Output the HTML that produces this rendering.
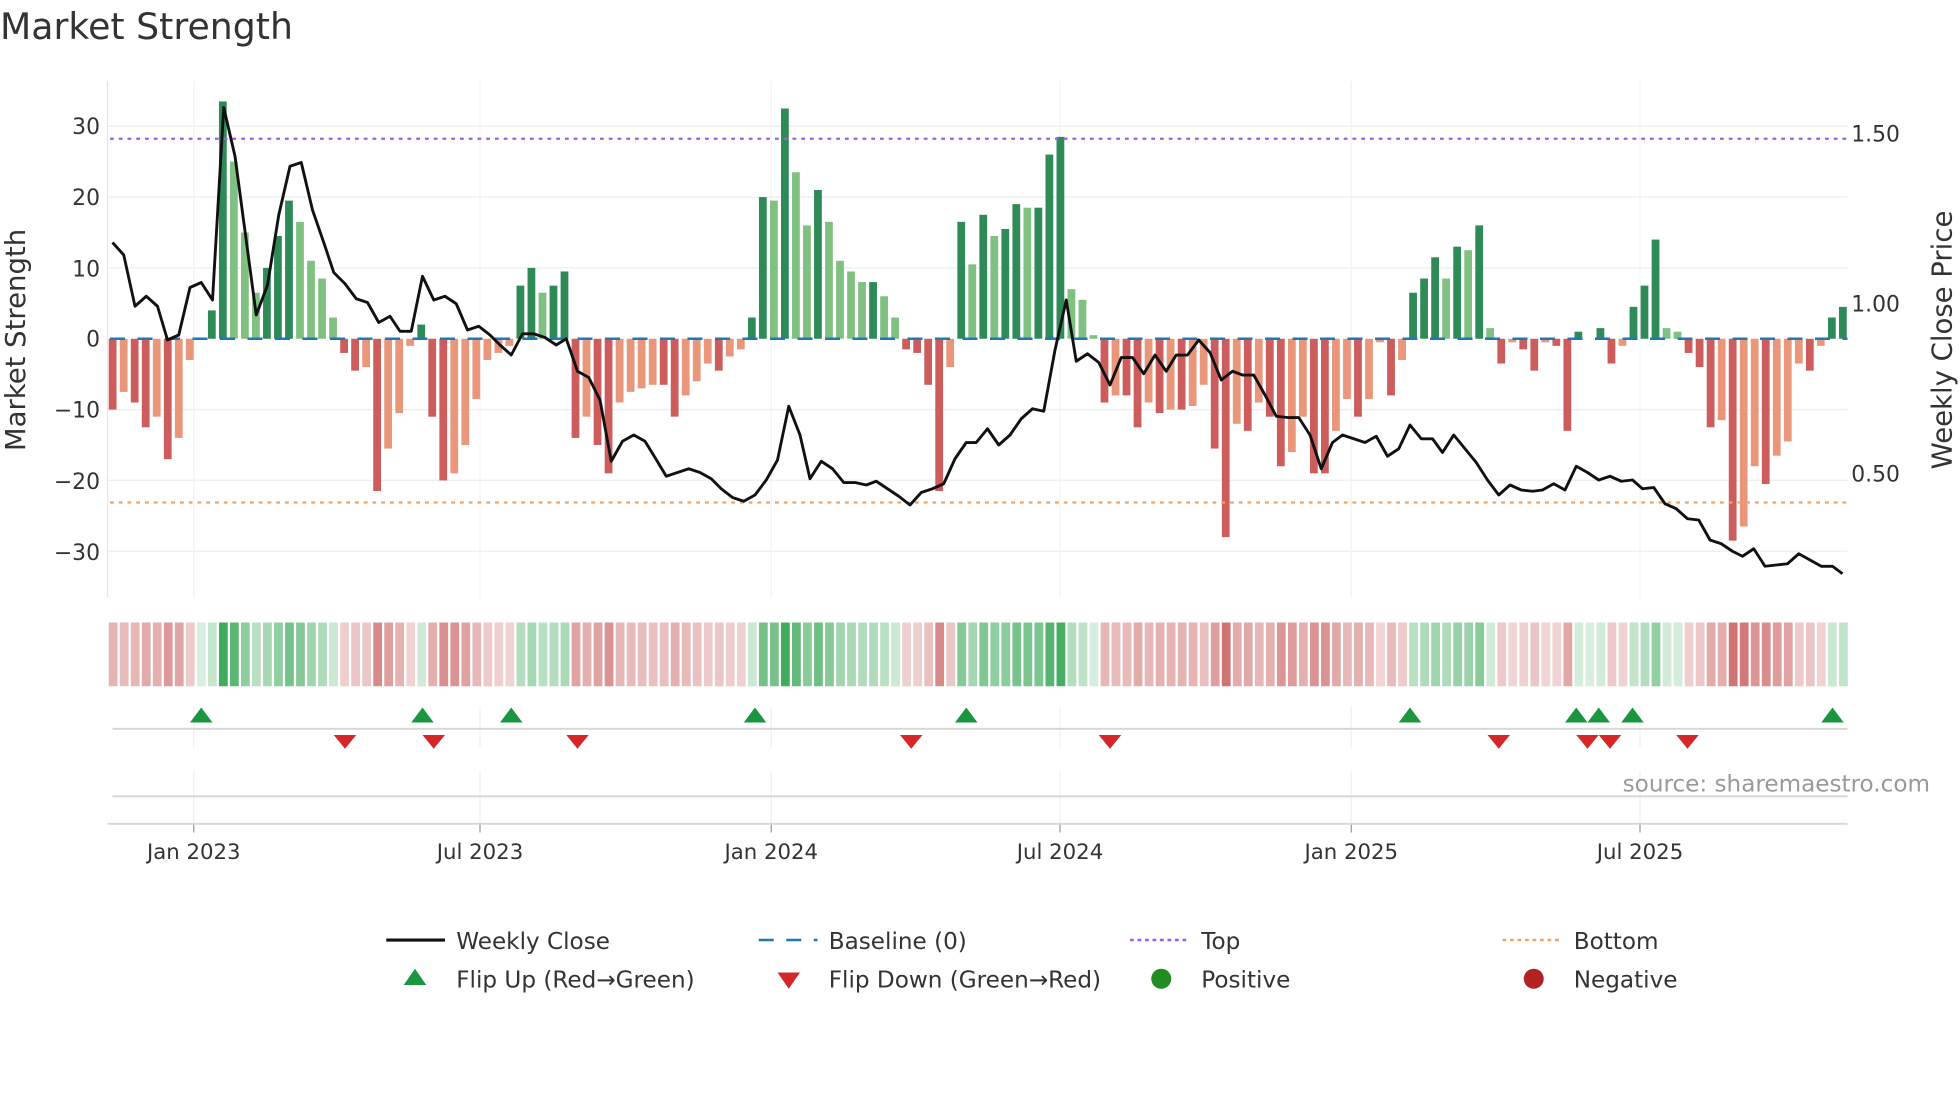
<!DOCTYPE html>
<html><head><meta charset="utf-8"><style>
html,body{margin:0;padding:0;background:#fff;width:1960px;height:1102px;overflow:hidden}
svg{display:block;font-family:"DejaVu Sans","Liberation Sans",sans-serif}
</style></head><body>
<svg id="s" width="1960" height="1102" viewBox="0 0 1568 881.6" xmlns="http://www.w3.org/2000/svg">
<rect width="1568" height="882" fill="#fff"/>
<text x="0" y="31" font-size="29" fill="#333">Market Strength</text>
<g id="grid"></g>
<g id="bars"></g>
<g id="heat"></g>
<g id="lines"></g>
<g font-size="17.5" fill="#333" text-anchor="end">
<text x="80" y="107">30</text><text x="80" y="164">20</text><text x="80" y="221">10</text><text x="80" y="277">0</text>
<text x="80" y="334">−10</text><text x="80" y="391">−20</text><text x="80" y="448">−30</text>
</g>
<g font-size="17.5" fill="#333">
<text x="1481" y="113">1.50</text><text x="1481" y="249">1.00</text><text x="1481" y="385">0.50</text>
</g>
<text transform="translate(20,272) rotate(-90)" font-size="22" fill="#333" text-anchor="middle">Market Strength</text>
<text transform="translate(1561,272) rotate(-90)" font-size="22" fill="#333" text-anchor="middle">Weekly Close Price</text>
<text x="1544" y="633" font-size="18.5" fill="#999" text-anchor="end">source: sharemaestro.com</text>
<g font-size="17" fill="#333" text-anchor="middle">
<text x="155" y="687">Jan 2023</text><text x="384" y="687">Jul 2023</text><text x="617" y="687">Jan 2024</text>
<text x="848" y="687">Jul 2024</text><text x="1081" y="687">Jan 2025</text><text x="1312" y="687">Jul 2025</text>
</g>
<g font-size="18.5" fill="#333">
<line x1="309" y1="752" x2="356" y2="752" stroke="#111" stroke-width="2.5"/><text x="365" y="759">Weekly Close</text>
<line x1="607" y1="752" x2="654" y2="752" stroke="#1f77b4" stroke-width="2" stroke-dasharray="12,10"/><text x="663" y="759">Baseline (0)</text>
<line x1="904" y1="752" x2="951" y2="752" stroke="#9b5de5" stroke-width="2" stroke-dasharray="3,3"/><text x="961" y="759">Top</text>
<line x1="1202" y1="752" x2="1249" y2="752" stroke="#f4a261" stroke-width="2" stroke-dasharray="3,3"/><text x="1259" y="759">Bottom</text>
<polygon points="332,775 341,788 323,788" fill="#1a9641"/><text x="365" y="790">Flip Up (Red→Green)</text>
<polygon points="622,778 640,778 631,791" fill="#d62728"/><text x="663" y="790">Flip Down (Green→Red)</text>
<circle cx="929" cy="783" r="8" fill="#228b22"/><text x="961" y="790">Positive</text>
<circle cx="1227" cy="783" r="8" fill="#b22222"/><text x="1259" y="790">Negative</text>
</g>
</svg>
<script>
var NS="http://www.w3.org/2000/svg";
function el(p,t,a){var e=document.createElementNS(NS,t);for(var k in a)e.setAttribute(k,a[k]);p.appendChild(e);return e;}
var v=[-10,-7.5,-9,-12.5,-11,-17,-14,-3,0,4,33.5,25,15,6.5,10,14.5,19.5,16.5,11,8.5,3,-2,-4.5,-4,-21.5,-15.5,-10.5,-1,2,-11,-20,-19,-15,-8.5,-3,-2,-1,7.5,10,6.5,7.5,9.5,-14,-11,-15,-19,-9,-7.5,-7,-6.5,-6.5,-11,-8,-6,-3.5,-4.5,-2.5,-1.5,3,20,19.5,32.5,23.5,16,21,16.5,11,9.5,8,8,6,3,-1.5,-2,-6.5,-21.5,-4,16.5,10.5,17.5,14.5,15.5,19,18.5,18.5,26,28.5,7,5.5,0.5,-9,-8,-8,-12.5,-9,-10.5,-10,-10,-9.5,-6.5,-15.5,-28,-12,-13,-9,-11,-18,-16,-11,-19,-19,-13,-8.5,-11,-8.5,-0.5,-8,-3,6.5,8.5,11.5,8.5,13,12.5,16,1.5,-3.5,-0.5,-1.5,-4.5,-0.5,-1,-13,1,0,1.5,-3.5,-1,4.5,7.5,14,1.5,1,-2,-4,-12.5,-11.5,-28.5,-26.5,-18,-20.5,-16.5,-14.5,-3.5,-4.5,-1,3,4.5];
var X0=86,W=(1479-86)/v.length,Y0=271,K=5.667;
var g=document.getElementById('grid');
[30,20,10,-10,-20,-30].forEach(function(t){el(g,'line',{x1:86,x2:1478,y1:Y0-t*K,y2:Y0-t*K,stroke:'#eef0f3','stroke-width':1.2});});
[155,384,617,848,1081,1312].forEach(function(x){el(g,'line',{x1:x,x2:x,y1:65,y2:478,stroke:'#f1f3f6','stroke-width':1});el(g,'line',{x1:x,x2:x,y1:565,y2:598,stroke:'#edf0f3'});el(g,'line',{x1:x,x2:x,y1:617,y2:659,stroke:'#edf0f3'});el(g,'line',{x1:x,x2:x,y1:659,y2:666,stroke:'#999'});});
el(g,'line',{x1:86,x2:86,y1:65,y2:478,stroke:'#e6e6e6','stroke-width':1});
var b=document.getElementById('bars'),h=document.getElementById('heat');
for(var i=0;i<v.length;i++){var x=X0+i*W+1,val=v[i],p=i?v[i-1]:val,c;
 if(val>=0)c=(val>=p)?'#2e8b57':'#80c080';else c=(val<=p)?'#cd5c5c':'#e9967a';
 var y=Y0-Math.max(val,0)*K,hh=Math.abs(val)*K;
 if(hh>0.3)el(b,'rect',{x:x,y:y,width:W-2.6,height:hh,fill:c});
 var a,hc;
 if(val>=0){a=0.2+0.8*Math.min(val/30,1);hc='rgba(65,171,93,'+a+')';}else{a=0.25+0.6*Math.min(-val/28,1);hc='rgba(200,90,90,'+a+')';}
 el(h,'rect',{x:x,y:498,width:W-1.8,height:51,fill:hc});
}
var pts=[[90,194],[99,204],[108,245],[117,237],[126,245],[134,272],[143,268],[152,230],[161,226],[170,240],[179,86],[188,125],[196,185],[205,252],[214,228],[223,172],[232,133],[241,130],[250,168],[259,194],[267,218],[276,227],[285,239],[294,242],[303,258],[312,253],[320,265],[329,265],[338,221],[347,240],[356,237],[365,243],[374,264],[383,261],[392,268],[400,276],[409,284],[418,267],[427,267],[436,270],[445,276],[453,271],[462,297],[471,302],[480,320],[489,369],[498,353],[507,348],[516,353],[524,366],[533,381],[542,378],[551,375],[560,378],[569,383],[577,391],[586,398],[595,401],[604,396],[613,384],[622,368],[631,325],[640,348],[648,383],[657,369],[666,375],[675,386],[684,386],[693,388],[701,385],[710,391],[719,397],[728,404],[737,394],[746,391],[755,387],[764,367],[773,354],[781,354],[790,343],[799,356],[808,348],[817,335],[826,327],[835,329],[844,280],[853,240],[861,289],[870,283],[879,290],[888,308],[897,286],[906,286],[915,299],[924,284],[933,297],[941,284],[950,284],[959,272],[968,282],[977,304],[986,297],[994,300],[1003,300],[1012,316],[1021,333],[1030,334],[1039,334],[1048,348],[1057,375],[1066,354],[1074,348],[1083,351],[1092,354],[1101,349],[1110,365],[1119,359],[1128,340],[1137,351],[1146,351],[1154,362],[1163,348],[1172,359],[1181,370],[1190,384],[1199,396],[1208,388],[1217,392],[1226,393],[1234,392],[1243,387],[1252,392],[1261,373],[1270,378],[1279,384],[1288,381],[1297,385],[1306,384],[1314,391],[1323,390],[1332,403],[1341,407],[1350,415],[1359,416],[1368,432],[1377,435],[1386,441],[1394,445],[1403,439],[1412,453],[1421,452],[1430,451],[1439,443],[1448,448],[1457,453],[1466,453],[1474,459]];
var L=document.getElementById('lines');
el(L,'line',{x1:88,x2:1478,y1:111,y2:111,stroke:'#9b5de5','stroke-width':1.8,'stroke-dasharray':'3,4'});
el(L,'line',{x1:88,x2:1478,y1:402,y2:402,stroke:'#f4a261','stroke-width':1.8,'stroke-dasharray':'3,4'});
el(L,'line',{x1:88,x2:1478,y1:271,y2:271,stroke:'#1f77b4','stroke-width':2,'stroke-dasharray':'12,10'});
el(L,'polyline',{points:pts.map(function(p){return p.join(',')}).join(' '),fill:'none',stroke:'#111','stroke-width':2.3,'stroke-linejoin':'round'});
el(L,'line',{x1:90,x2:1478,y1:583,y2:583,stroke:'#d6d6d6','stroke-width':1.5});
el(L,'line',{x1:90,x2:1478,y1:637,y2:637,stroke:'#d6d6d6','stroke-width':1.5});
el(L,'line',{x1:86,x2:1478,y1:659,y2:659,stroke:'#d6d6d6','stroke-width':1.5});
[161,338,409,604,773,1128,1261,1279,1306,1466].forEach(function(x){el(L,'polygon',{points:(x)+',566 '+(x+9)+',578 '+(x-9)+',578',fill:'#1a9641'});});
[276,347,462,729,888,1199,1270,1288,1350].forEach(function(x){el(L,'polygon',{points:(x-9)+',588 '+(x+9)+',588 '+x+',599',fill:'#d62728'});});
</script>
</body></html>
